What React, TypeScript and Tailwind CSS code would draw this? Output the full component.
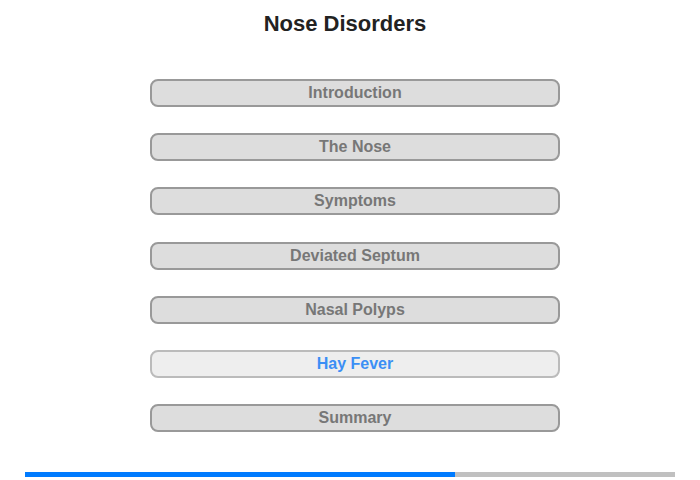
const items = [
  "Introduction",
  "The Nose",
  "Symptoms",
  "Deviated Septum",
  "Nasal Polyps",
  "Hay Fever",
  "Summary",
];

const activeItem = "Hay Fever";

export default function App() {
  return (
    <div className="w-[700px] h-[480px] bg-white font-['Liberation_Sans',Arial,sans-serif] flex flex-col">
      <h1 className="w-[690px] text-center text-[22px] font-bold text-[#222] pt-[11px] leading-[26px]">
        Nose Disorders
      </h1>

      <div className="flex flex-col gap-[26.2px] pl-[150px] pt-[42px]">
        {items.map((item) => {
          const active = item === activeItem;
          return (
            <button
              key={item}
              className={
                active
                  ? "w-[410px] h-[28px] rounded-[8px] border-2 border-[#bbb] bg-[#eee] text-[#3b8ff5] text-[16px] font-bold leading-none"
                  : "w-[410px] h-[28px] rounded-[8px] border-2 border-[#999] bg-[#ddd] text-[#777] text-[16px] font-bold leading-none"
              }
            >
              {item}
            </button>
          );
        })}
      </div>

      <div className="mt-auto mb-[3px] ml-[25px] w-[650px] h-[5px] flex">
        <div className="w-[430px] bg-[#007bff]" />
        <div className="flex-1 bg-[#c0c0c0]" />
      </div>
    </div>
  );
}
